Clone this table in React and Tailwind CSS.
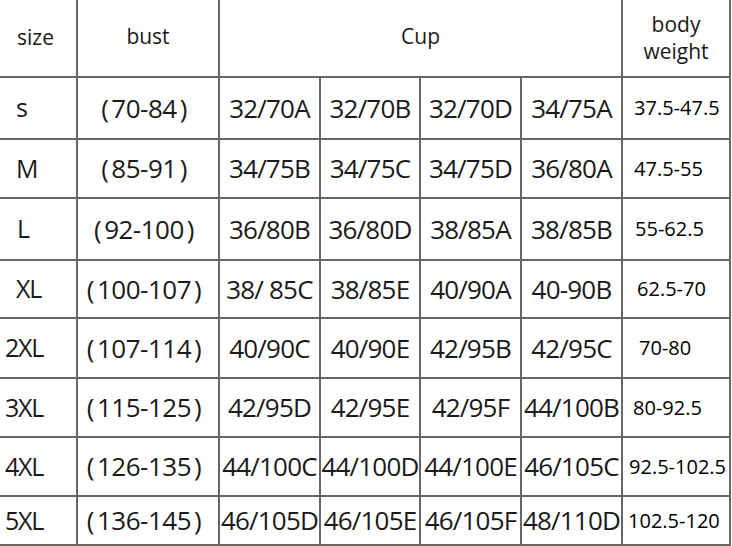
const ROWS = [
  { size: 's', sizePad: 'pl-[16px]', bust: '70-84', cups: ['32/70A', '32/70B', '32/70D', '34/75A'], weight: '37.5-47.5', wPad: 'pl-[11px]', h: 'h-[62px]' },
  { size: 'M', sizePad: 'pl-[16px]', bust: '85-91', cups: ['34/75B', '34/75C', '34/75D', '36/80A'], weight: '47.5-55', wPad: 'pl-[11px]', h: 'h-[59px]' },
  { size: 'L', sizePad: 'pl-[17px]', bust: '92-100', cups: ['36/80B', '36/80D', '38/85A', '38/85B'], weight: '55-62.5', wPad: 'pl-[12px]', h: 'h-[62px]' },
  { size: 'XL', sizePad: 'pl-[16px]', bust: '100-107', cups: ['38/ 85C', '38/85E', '40/90A', '40-90B'], weight: '62.5-70', wPad: 'pl-[14px]', h: 'h-[58px]' },
  { size: '2XL', sizePad: 'pl-[5px]', bust: '107-114', cups: ['40/90C', '40/90E', '42/95B', '42/95C'], weight: '70-80', wPad: 'pl-[16px]', h: 'h-[60px]' },
  { size: '3XL', sizePad: 'pl-[5px]', bust: '115-125', cups: ['42/95D', '42/95E', '42/95F', '44/100B'], weight: '80-92.5', wPad: 'pl-[10px]', h: 'h-[59px]' },
  { size: '4XL', sizePad: 'pl-[5px]', bust: '126-135', cups: ['44/100C', '44/100D', '44/100E', '46/105C'], weight: '92.5-102.5', wPad: 'pl-[6px]', h: 'h-[59px]' },
  { size: '5XL', sizePad: 'pl-[5px]', bust: '136-145', cups: ['46/105D', '46/105E', '46/105F', '48/110D'], weight: '102.5-120', wPad: 'pl-[5px]', h: 'h-[49px]' },
]

const cell = 'border-2 border-[#666] p-0 align-middle whitespace-nowrap overflow-visible'

export default function App() {
  return (
    <div className="w-[732px] h-[546px] bg-white overflow-hidden text-[#1a1a1a]"
      style={{ fontFamily: '"Open Sans", "Noto Sans", sans-serif' }}>
      <table className="table-fixed border-collapse w-[730px]">
        <colgroup>
          <col className="w-[77px]" />
          <col className="w-[142px]" />
          <col className="w-[101px]" />
          <col className="w-[100px]" />
          <col className="w-[101px]" />
          <col className="w-[101px]" />
          <col className="w-[108px]" />
        </colgroup>
        <tbody>
          {/* Header */}
          <tr className="h-[77px]">
            <td className={`${cell} border-t-0 border-l-0 text-[21px] pl-[17px]`}>size</td>
            <td className={`${cell} border-t-0 text-[21px] text-center pb-[3px]`}>bust</td>
            <td colSpan={4} className={`${cell} border-t-0 text-[21px] text-center pb-[3px]`}>Cup</td>
            <td className={`${cell} border-t-0 text-[21px] leading-[27px] text-center pb-[1px]`}>
              body<br />weight
            </td>
          </tr>

          {/* Rows */}
          {ROWS.map(r => (
            <tr key={r.size} className={r.h}>
              <td className={`${cell} border-l-0 text-[25px] tracking-[-1.2px] ${r.sizePad}`}>{r.size}</td>
              <td className={`${cell} text-[26px] tracking-[-0.5px] text-center pr-[8px]`}>
                <span className="mr-[3px]">(</span>{r.bust}<span className="ml-[3px]">)</span>
              </td>
              {r.cups.map((c, i) => (
                <td key={i} className={`${cell} text-[26px] tracking-[-0.8px] text-center`}>{c}</td>
              ))}
              <td className={`${cell} text-[20px] text-black ${r.wPad}`}>{r.weight}</td>
            </tr>
          ))}
        </tbody>
      </table>
    </div>
  )
}
